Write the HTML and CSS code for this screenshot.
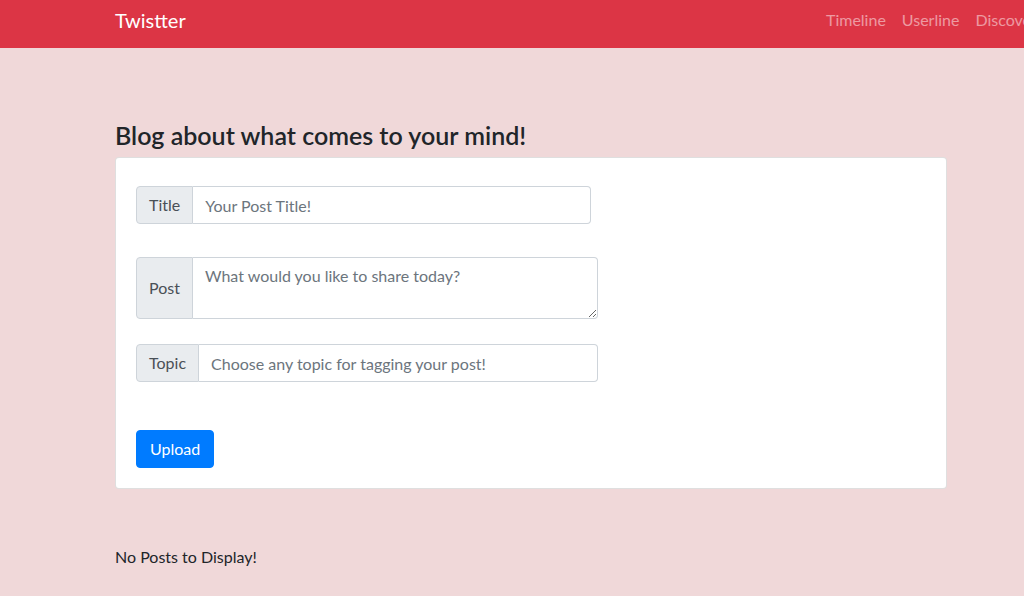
FILE: index.html
```html
<!DOCTYPE html>
<html lang="en">
<head>
<meta charset="utf-8">
<title>Twistter</title>
<link rel="stylesheet" href="styles.css">
</head>
<body>
<nav class="navbar">
  <a class="brand" href="#">Twistter</a>
  <ul class="nav-links">
    <li><a href="#">Timeline</a></li>
    <li><a href="#">Userline</a></li>
    <li><a href="#">Discover</a></li>
  </ul>
</nav>
<main class="main">
  <h4 class="heading">Blog about what comes to your mind!</h4>
  <div class="card">
    <div class="input-group group-title">
      <span class="prepend">Title</span>
      <input class="field" type="text" placeholder="Your Post Title!">
    </div>
    <div class="input-group group-post">
      <span class="prepend">Post</span>
      <textarea class="field area" placeholder="What would you like to share today?"></textarea>
    </div>
    <div class="input-group group-topic">
      <span class="prepend">Topic</span>
      <input class="field" type="text" placeholder="Choose any topic for tagging your post!">
    </div>
    <button class="btn" type="button">Upload</button>
  </div>
  <p class="empty">No Posts to Display!</p>
</main>
</body>
</html>
```
FILE: styles.css
```css
* { box-sizing: border-box; }
html, body { margin: 0; padding: 0; }
body {
  font-family: Lato, "Liberation Sans", sans-serif;
  font-size: 16px;
  color: #212529;
  background: #f0d8d9;
  overflow: hidden;
  width: 1024px;
  height: 596px;
}
.navbar {
  height: 48px;
  background: #dc3545;
  display: grid;
  grid-template-columns: 703px auto;
  align-items: center;
  padding-left: 115px;
  white-space: nowrap;
  overflow: hidden;
}
.brand {
  color: #fff;
  font-size: 20px;
  text-decoration: none;
  margin-top: -8px;
}
.nav-links {
  display: flex;
  list-style: none;
  margin: -10px 0 0;
  padding: 0;
}
.nav-links a {
  display: block;
  padding: 0 8px;
  color: rgba(255,255,255,.5);
  text-decoration: none;
}
.main {
  padding: 73px 0 0 115px;
  width: 947px;
}
.heading {
  margin: 0 0 8px;
  font-size: 25px;
  font-weight: 600;
  line-height: 28px;
}
.card {
  background: #fff;
  border: 1px solid rgba(0,0,0,.125);
  border-radius: 4px;
  padding: 28px 20px 20px;
  display: flex;
  flex-direction: column;
  align-items: flex-start;
}
.input-group {
  display: flex;
  align-items: stretch;
  height: 38px;
}
.group-title { width: 455px; }
.group-post { width: 462px; height: 62px; margin-top: 33px; }
.group-topic { width: 462px; margin-top: 25px; }
.prepend {
  display: flex;
  align-items: center;
  padding: 0 12px 1px;
  background: #e9ecef;
  color: #495057;
  border: 1px solid #ced4da;
  border-radius: 4px 0 0 4px;
  font-size: 16px;
}
.field {
  flex: 1;
  min-width: 0;
  border: 1px solid #ced4da;
  border-left: 0;
  border-radius: 0 4px 4px 0;
  padding: 6px 12px;
  font-family: inherit;
  font-size: 16px;
  color: #495057;
  outline: none;
}
.field::placeholder { color: #6c757d; opacity: 1; }
.area {
  resize: vertical;
  line-height: 1.5;
  padding-top: 6px;
}
.btn {
  margin-top: 48px;
  height: 38px;
  padding: 0 13px 1px;
  background: #007bff;
  color: #fff;
  border: 1px solid #007bff;
  border-radius: 4px;
  font-family: inherit;
  font-size: 16px;
}
.empty {
  margin: 56px 0 0;
  line-height: 24px;
}
```
